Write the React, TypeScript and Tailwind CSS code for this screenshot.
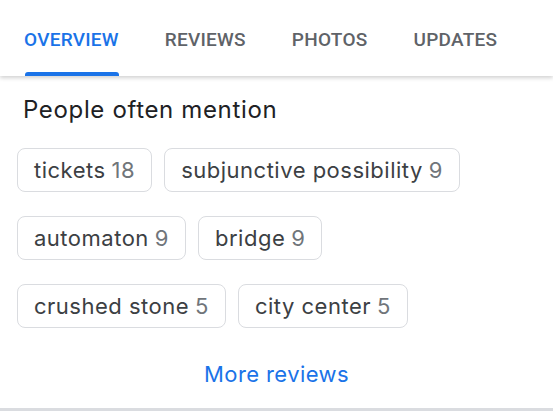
import React from "react";

const tabs = ["OVERVIEW", "REVIEWS", "PHOTOS", "UPDATES"];
const rows: [string, number][][] = [
  [["tickets", 18], ["subjunctive possibility", 9]],
  [["automaton", 9], ["bridge", 9]],
  [["crushed stone", 5], ["city center", 5]],
];

export default function App() {
  return (
    <div className="w-[553px] h-[416px] bg-white overflow-hidden" style={{ fontFamily: "Roboto, 'Noto Sans', sans-serif" }}>
      <div className="relative h-[76px] flex items-start pl-[24px] shadow-[0_2px_4px_rgba(0,0,0,0.18)]">
        {tabs.map((t, i) => (
          <div key={t} className="relative flex flex-col items-center h-full">
            <div
              className={`pt-[28px] leading-[24px] text-[19px] font-medium tracking-[0.25px] ${i === 0 ? "text-[#1a73e8]" : "text-[#5f6368]"} ${i < 3 ? "mr-[46px]" : ""}`}
            >
              {t}
            </div>
            {i === 0 && <div className="absolute left-[1px] right-[0px] bottom-0 h-[4px] rounded-t-[3px] bg-[#1a73e8] mr-[46px]" />}
          </div>
        ))}
      </div>
      <div className="font-['Inter',sans-serif]">
        <div className="pt-[18px] pl-[23px] text-[24px] tracking-[0.65px] text-[#202124] leading-[32px]">People often mention</div>
        <div className="pl-[17px] pt-[22px] flex flex-col gap-[24px]">
          {rows.map((r, i) => (
            <div key={i} className="flex gap-[12px]">
              {r.map(([l, n]) => (
                <div key={l} className="h-[44px] px-[16px] flex items-center rounded-[8px] border border-[#dadce0] text-[22px] tracking-[0.5px] leading-[28px] text-[#3c4043]">
                  {l}
                  <span className="ml-[6px] text-[#70757a]">{n}</span>
                </div>
              ))}
            </div>
          ))}
        </div>
        <div className="mt-[32px] text-center text-[22px] tracking-[0.4px] text-[#1a73e8] leading-[28px]">More reviews</div>
      </div>
      <div className="mt-[20px] h-[3px] bg-[#dadce0]" />
    </div>
  );
}
